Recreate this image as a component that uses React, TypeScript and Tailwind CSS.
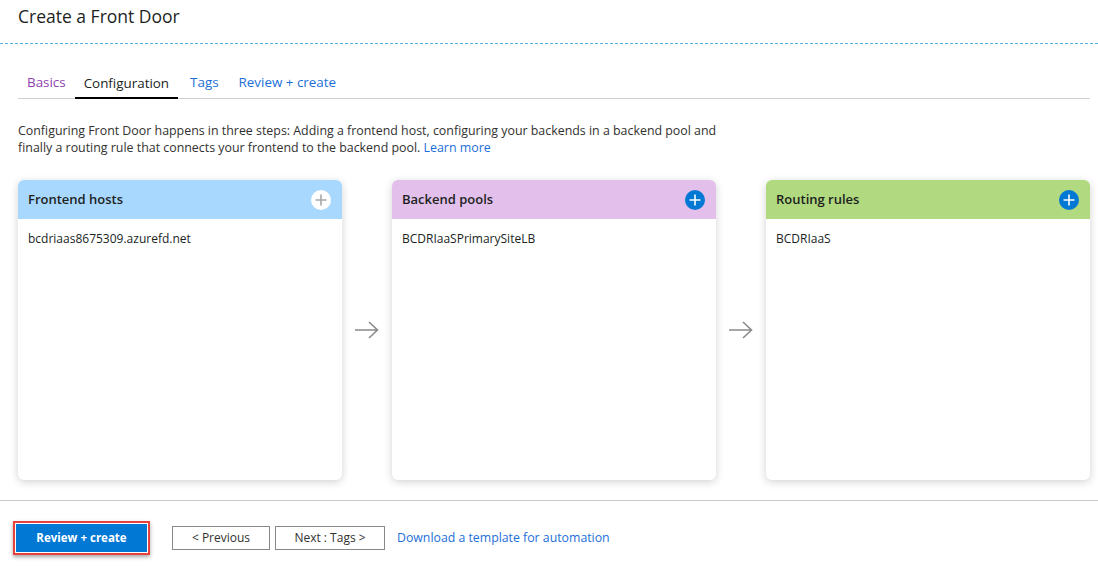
import React from "react";

function PlusCircle({ filled }: { filled: boolean }) {
  return (
    <svg width="20" height="20" viewBox="0 0 20 20">
      <circle cx="10" cy="10" r="10" fill={filled ? "#0078d4" : "#ffffff"} />
      <path d="M10 4.5v11M4.5 10h11" stroke={filled ? "#ffffff" : "#a6a6a6"} strokeWidth="1.6" />
    </svg>
  );
}

function Arrow() {
  return (
    <div className="w-[50px] shrink-0 flex items-center justify-center">
      <svg width="26" height="20" viewBox="0 0 26 20">
        <path d="M1 10h23M15 2l8.5 8L15 18" stroke="#8a8a8a" strokeWidth="1.6" fill="none" />
      </svg>
    </div>
  );
}

function Card({ title, color, item, filled }: { title: string; color: string; item: string; filled: boolean }) {
  return (
    <div className="w-[324px] shrink-0 h-[300px] bg-white rounded-[6px] shadow-[0_2px_8px_rgba(0,0,0,0.18)] overflow-hidden flex flex-col">
      <div className={`h-[39px] ${color} flex items-center justify-between pl-[10px] pr-[11px] pt-[1px]`}>
        <span className="text-[13px] font-semibold text-[#201f1e]">{title}</span>
        <PlusCircle filled={filled} />
      </div>
      <div className="px-[10px] pt-[11px] text-[12px] text-[#201f1e]">{item}</div>
    </div>
  );
}

export default function App() {
  return (
    <div
      className="w-[1098px] h-[566px] bg-white overflow-hidden relative"
      style={{ fontFamily: '"Open Sans", "Noto Sans", sans-serif' }}
    >
      <div className="h-[43px] pl-[18px] pt-[3px] text-[17.5px] text-[#201f1e]">Create a Front Door</div>
      <div className="border-t border-dashed border-[#4db3e0]" />
      <div className="pl-[18px] pr-[8px]">
        <div className="mt-[29px] flex items-end border-b border-[#d0d0d0] text-[13.4px] h-[26px] w-[1072px]">
          <div className="pl-[9px] pr-[9px] pb-[6px] text-[#8e3fb0]">Basics</div>
          <div className="px-[9px] pb-[4px] border-b-[2px] border-black text-[#201f1e] mb-[-1px]">Configuration</div>
          <div className="pl-[12px] pr-[10px] pb-[6px] text-[#1d6fd8]">Tags</div>
          <div className="pl-[10px] pr-[10px] pb-[6px] text-[#1d6fd8]">Review + create</div>
        </div>
        <p className="mt-[23px] text-[12.4px] leading-[17px] text-[#323130] w-[712px]">
          Configuring Front Door happens in three steps: Adding a frontend host, configuring your backends in a backend pool and finally a routing rule that connects your frontend to the backend pool.{" "}
          <span className="text-[#1d6fd8]">Learn more</span>
        </p>
        <div className="mt-[24px] flex items-stretch">
          <Card title="Frontend hosts" color="bg-[#a9d8fe]" item="bcdriaas8675309.azurefd.net" filled={false} />
          <Arrow />
          <Card title="Backend pools" color="bg-[#e3bfec]" item="BCDRIaaSPrimarySiteLB" filled={true} />
          <Arrow />
          <Card title="Routing rules" color="bg-[#b1d980]" item="BCDRIaaS" filled={true} />
        </div>
      </div>
      <div className="mt-[20px] border-t border-[#c8c8c8]" />
      <div className="pl-[13px] pt-[20px] flex items-center">
        <div className="border-[2px] border-[#e8403c] p-[1px] shadow-[0_2px_4px_rgba(0,0,0,0.35)]">
          <button className="w-[131px] h-[28px] bg-[#0078d4] text-white text-[11.5px] font-bold">Review + create</button>
        </div>
        <button className="ml-[22px] w-[98px] h-[24px] border border-[#8a8886] text-[12px] text-[#323130]">&lt; Previous</button>
        <button className="ml-[5px] w-[110px] h-[24px] border border-[#8a8886] text-[12px] text-[#323130]">Next : Tags &gt;</button>
        <span className="ml-[12px] text-[12.3px] text-[#1d6fd8]">Download a template for automation</span>
      </div>
    </div>
  );
}
